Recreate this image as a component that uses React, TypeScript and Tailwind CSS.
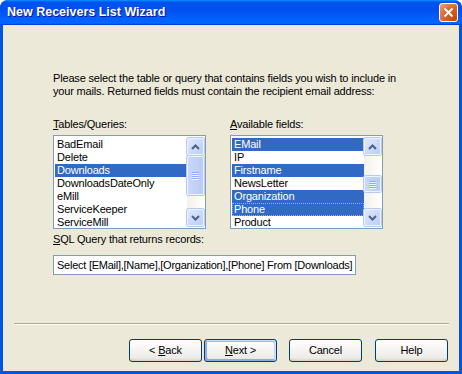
import React from "react";

const tables = ["BadEmail", "Delete", "Downloads", "DownloadsDateOnly", "eMill", "ServiceKeeper", "ServiceMill"];
const fields = ["EMail", "IP", "Firstname", "NewsLetter", "Organization", "Phone", "Product"];

function Arrow({ up }: { up: boolean }) {
  return (
    <svg width="9" height="6" viewBox="0 0 9 6">
      <polyline
        points={up ? "1,5 4.5,1.5 8,5" : "1,1 4.5,4.5 8,1"}
        fill="none"
        stroke="#4d6185"
        strokeWidth="2"
      />
    </svg>
  );
}

function ScrollBtn({ up }: { up: boolean }) {
  return (
    <div className="flex h-[17px] w-[17px] shrink-0 items-center justify-center rounded-[2px] border border-[#eef3fe] bg-[linear-gradient(135deg,#dfe8fe,#bacdf7)] shadow-[0_0_0_1px_#b5c9f3]">
      <Arrow up={up} />
    </div>
  );
}

// thumb offset/height are per-list values
function ScrollBar({ top, height }: { top: number; height: number }) {
  return (
    <div className="flex w-[17px] flex-1 flex-col bg-[linear-gradient(90deg,#f3f1ec,#fefefb)]">
      <ScrollBtn up />
      <div className="flex-1">
        <div
          className="flex flex-col items-center justify-center gap-[1px] rounded-[2px] border border-[#eef3fe] bg-[linear-gradient(90deg,#c9d8fc,#b8cbf6)] shadow-[0_0_0_1px_#b5c9f3]"
          style={{ marginTop: top, height }}
        >
          {[0, 1, 2, 3].map((i) => (
            <div key={i} className="h-px w-[7px] bg-[#8cb0f8] shadow-[0_1px_0_#eef4fe]" />
          ))}
        </div>
      </div>
      <ScrollBtn up={false} />
    </div>
  );
}

function ListBox({
  items,
  selected,
  focus,
  thumbTop,
  thumbH,
}: {
  items: string[];
  selected: string[];
  focus?: string;
  thumbTop: number;
  thumbH: number;
}) {
  return (
    <div className="flex h-[94px] w-[153px] overflow-hidden border border-[#7f9db9] bg-white p-[1px]">
      <div className="flex-1 overflow-hidden pt-px">
        {items.map((it) => {
          const sel = selected.includes(it);
          return (
            <div
              key={it}
              className={
                "h-[13px] whitespace-nowrap pl-[2px] leading-[13px] " +
                (sel ? "bg-[#316ac5] text-white " : "text-black ") +
                (focus === it ? "outline-1 outline-dotted -outline-offset-1 outline-[#e8a33a]" : "")
              }
            >
              {it}
            </div>
          );
        })}
      </div>
      <div className="flex flex-col py-px">
        <ScrollBar top={thumbTop} height={thumbH} />
      </div>
    </div>
  );
}

function Button({ children, def }: { children: React.ReactNode; def?: boolean }) {
  return (
    <button
      className={
        "flex h-[23px] w-[73px] items-center justify-center rounded-[3px] border border-[#003c74] bg-[linear-gradient(180deg,#ffffff,#ecebe6_86%,#d6d0c5)] text-[11px] text-black " +
        (def
          ? "shadow-[inset_-1px_1px_#cee7ff,inset_1px_2px_#98b8ea,inset_-2px_2px_#bcd4f6,inset_1px_-1px_#89ade4,inset_2px_-2px_#89ade4]"
          : "")
      }
    >
      <span>{children}</span>
    </button>
  );
}

export default function App() {
  return (
    <div className="flex h-[374px] w-[462px] flex-col overflow-hidden rounded-t-[8px] bg-[#0054e3] font-['Liberation_Sans',Arial,sans-serif] text-[11px] leading-[13px] tracking-[-0.17px] text-black">
      {/* title bar */}
      <div className="flex h-[25px] shrink-0 justify-between bg-[linear-gradient(180deg,#0997ff,#0053ee_8%,#0050ee_40%,#0066ff_88%,#0066ff_93%,#005bff_95%,#003dd7_96%,#003dd7)] pl-[7px] pr-[4px]">
        <div className="pt-[5px] text-[12.5px] font-bold leading-[15px] tracking-normal text-white [text-shadow:1px_1px_#0f1089]">
          New Receivers List Wizard
        </div>
        <div className="pt-[3px]">
          <div className="flex h-[19px] w-[19px] items-center justify-center rounded-[3px] border border-white bg-[radial-gradient(circle_at_90%_90%,#cc4600,#dc6527_55%,#e8a28b)]">
            <svg width="11" height="11" viewBox="0 0 11 11">
              <path d="M1.5 1.5 L9.5 9.5 M9.5 1.5 L1.5 9.5" stroke="#fff" strokeWidth="2" />
            </svg>
          </div>
        </div>
      </div>

      {/* client area */}
      <div className="mx-[3px] mb-[3px] flex flex-1 flex-col bg-[#ece9d8]">
        <div className="pl-[50px] pr-[20px] pt-[47px]">
          <p className="whitespace-nowrap">
            Please select the table or query that contains fields you wish to include in
            <br />
            your mails. Returned fields must contain the recipient email address:
          </p>

          <div className="mt-[20px] flex gap-[24px]">
            <div className="flex flex-col gap-[4px]">
              <div>
                <span className="underline">T</span>ables/Queries:
              </div>
              <ListBox items={tables} selected={["Downloads"]} thumbTop={1} thumbH={39} />
            </div>
            <div className="flex flex-col gap-[4px]">
              <div>
                <span className="underline">A</span>vailable fields:
              </div>
              <ListBox
                items={fields}
                selected={["EMail", "Firstname", "Organization", "Phone"]}
                focus="Phone"
                thumbTop={21}
                thumbH={16}
              />
            </div>
          </div>

          <div className="mt-[4px]">
            <span className="underline">S</span>QL Query that returns records:
          </div>
          <div className="mt-[9px] flex h-[20px] w-[303px] items-center whitespace-nowrap border border-[#7f9db9] bg-white pl-[3px] tracking-[-0.25px]">
            Select [EMail],[Name],[Organization],[Phone] From [Downloads]
          </div>
        </div>

        <div className="mt-[48px] ml-[11px] mr-[10px] h-[2px] border-t border-[#aca899] border-b border-b-white" />

        <div className="mt-[14px] flex justify-end pr-[11px]">
          <Button>
            &lt; <span className="underline">B</span>ack
          </Button>
          <div className="ml-[2px]">
            <Button def>
              <span className="underline">N</span>ext &gt;
            </Button>
          </div>
          <div className="ml-[12px]">
            <Button>Cancel</Button>
          </div>
          <div className="ml-[13px]">
            <Button>Help</Button>
          </div>
        </div>
      </div>
    </div>
  );
}
